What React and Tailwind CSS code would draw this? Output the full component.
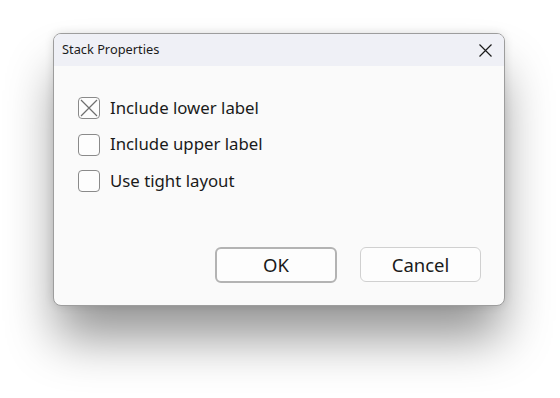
import React, { useState } from "react";

const CheckRow = ({ label, checked, onToggle }) => (
  <label className="flex items-center gap-[10px] h-[22px] cursor-default select-none" onClick={onToggle}>
    <span className="relative w-[22px] h-[22px] rounded-[4px] border border-[#8a8a8a] bg-[#fdfdfd] shrink-0">
      {checked && (
        <svg className="absolute inset-0" width="20" height="20" viewBox="0 0 20 20">
          <path d="M2 2 L18 18 M18 2 L2 18" stroke="#6f6f6f" strokeWidth="1.2" fill="none" />
        </svg>
      )}
    </span>
    <span className="text-[16.8px] text-[#1a1a1a] leading-none">{label}</span>
  </label>
);

const App = () => {
  const [opts, setOpts] = useState({ lower: true, upper: false, tight: false });
  const toggle = (k) => setOpts((o) => ({ ...o, [k]: !o[k] }));

  return (
    <div className="w-[560px] h-[398px] bg-white pl-[53px] pt-[33px] font-['Noto_Sans',sans-serif]">
      <div className="w-[452px] h-[273px] flex flex-col rounded-[8px] border border-[#9d9d9d] bg-[#fafafa] overflow-hidden shadow-[0_36px_50px_-4px_rgba(0,0,0,0.42),0_0_10px_rgba(0,0,0,0.12)]">
        {/* Title bar */}
        <div className="h-[32px] bg-[#eff0f6] flex items-center justify-between pl-[8px] pr-[12px]">
          <span className="text-[12.8px] text-[#1b1b1b]">Stack Properties</span>
          <svg width="13" height="13" viewBox="0 0 13 13">
            <path d="M0.5 0.5 L12.5 12.5 M12.5 0.5 L0.5 12.5" stroke="#1b1b1b" strokeWidth="1.2" fill="none" />
          </svg>
        </div>

        {/* Options */}
        <div className="flex flex-col gap-[14.5px] pl-[24px] pt-[31px]">
          <CheckRow label="Include lower label" checked={opts.lower} onToggle={() => toggle("lower")} />
          <CheckRow label="Include upper label" checked={opts.upper} onToggle={() => toggle("upper")} />
          <CheckRow label="Use tight layout" checked={opts.tight} onToggle={() => toggle("tight")} />
        </div>

        {/* Buttons */}
        <div className="mt-auto flex justify-end gap-[23px] pr-[23px] pb-[22px]">
          <button className="w-[122px] h-[36px] rounded-[6px] border-2 border-[#b3b3b3] bg-[#fdfdfd] text-[18.5px] text-[#1a1a1a]">
            OK
          </button>
          <button className="w-[121px] h-[35px] rounded-[6px] border border-[#d0d0d0] bg-[#fdfdfd] text-[18.5px] text-[#1a1a1a]">
            Cancel
          </button>
        </div>
      </div>
    </div>
  );
};

export default App;
